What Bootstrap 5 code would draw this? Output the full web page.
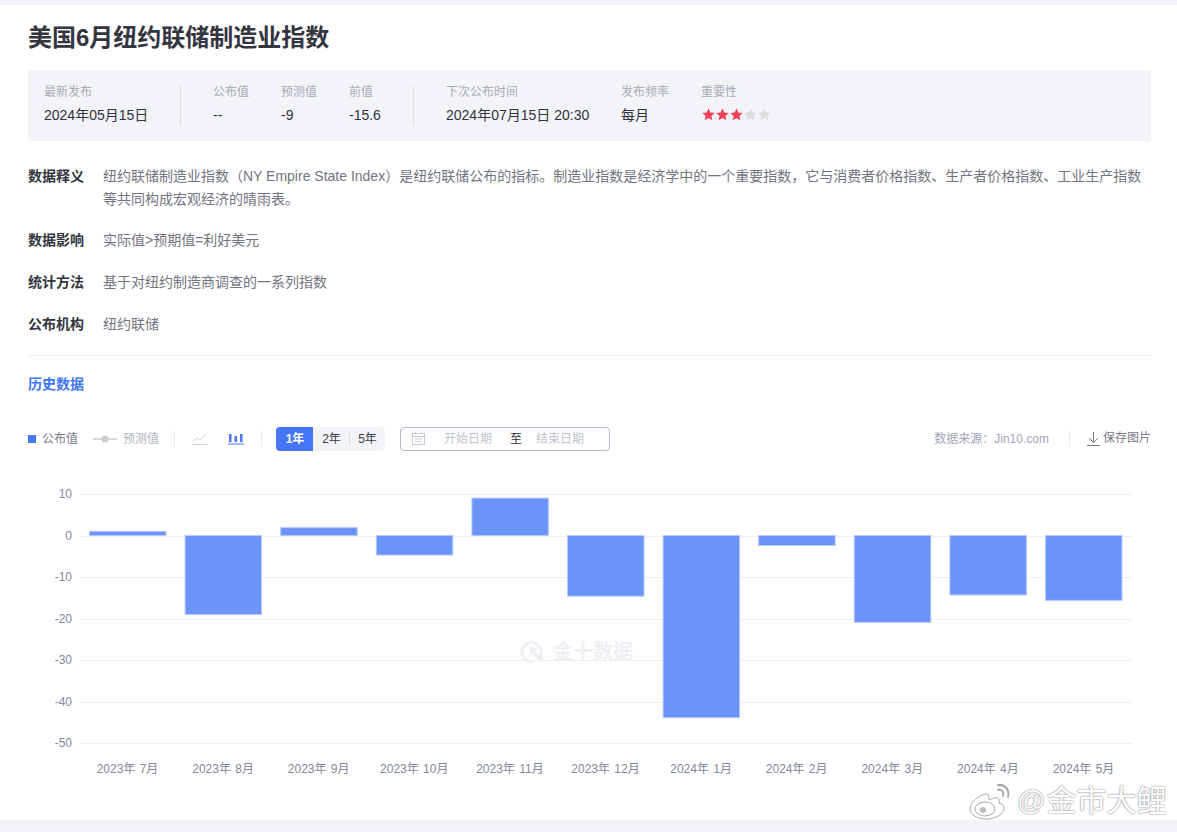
<!DOCTYPE html>
<html lang="zh-CN">
<head>
    <meta charset="UTF-8">
    <meta name="viewport" content="width=device-width, initial-scale=1.0">
    <title>美国6月纽约联储制造业指数</title>
    <link href="https://cdn.jsdelivr.net/npm/bootstrap@5.3.0/dist/css/bootstrap.min.css" rel="stylesheet">
    <style>
        html, body { height: 832px; overflow: hidden; }
        body {
            background: #f3f4f8;
            color: #2f3140;
            font-family: "Liberation Sans", "Noto Sans CJK SC", sans-serif;
            padding-top: 5px;
            position: relative;
        }
        .page-box { background: #fff; height: 815px; padding: 0 26px 0 28px; overflow: hidden; }
        .page-title { font-size: 24px; font-weight: 700; line-height: 32px; margin: 0; padding-top: 17px; height: 65px; color: #33353f; }
        .info-bar { background: #f3f4f8; height: 71px; padding: 14px 0 0 16px; }
        .info-col { flex: none; }
        .info-label { font-size: 12px; line-height: 17px; color: #a8abbc; }
        .info-value { font-size: 14px; line-height: 20px; margin-top: 4px; color: #2f3140; }
        .info-sep { width: 1px; height: 40px; background: #dcdee6; margin-top: 2px; flex: none; }
        .stars { display: flex; gap: 1px; margin: 7px 0 0 1px; }
        .stars svg { width: 13px; height: 13px; }
        .desc-list { padding-top: 24px; }
        .desc-row { display: flex; font-size: 14px; line-height: 23px; margin-bottom: 19px; }
        .desc-row.first-row { margin-bottom: 18px; }
        .desc-name { width: 75px; flex: none; font-weight: 700; color: #33353f; }
        .desc-text { color: #72747f; }
        .desc-rule { border-top: 1px solid #eceef2; margin-top: 19px; }
        .hist-title { color: #3f76f6; font-size: 14px; font-weight: 700; line-height: 20px; margin-top: 18px; }
        .tool-row { height: 24px; margin-top: 33px; font-size: 12px; }
        .leg-square { width: 8px; height: 8px; background: #4476f6; margin-right: 6px; }
        .leg-on { color: #7a7c89; }
        .leg-off { color: #b0b2be; }
        .tool-sep { width: 1px; height: 16px; background: #e9eaef; flex: none; }
        .range-group { display: flex; height: 24px; background: #f3f4f8; border-radius: 4px; overflow: hidden; line-height: 24px; text-align: center; color: #3a3c49; }
        .range-item { width: 36px; position: relative; padding-left: 1px; }
        .range-item.on { width: 37px; background: #4476f6; color: #fff; font-weight: 700; }
        .range-item + .range-item:not(.first)::before { content: ""; position: absolute; left: 0; top: 6px; height: 12px; width: 1px; background: #d9dbe3; }
        .date-box { width: 210px; height: 24px; margin-left: 15px; border: 1px solid #b6b9cc; border-radius: 4px; color: #c0c2cc; line-height: 22px; padding-left: 11px; }
        .date-icon { margin-right: 19px; margin-top: -2px; }
        .date-to { color: #2f3140; margin: 0 15px 0 17px; position: relative; left: 1px; }
        .src-text { color: #a1a4b6; }
        .save-text { color: #777985; margin-top: -3px; }
        .chart-box { display: block; margin: 0 0 0 -28px; }
        .chart-box text { font-family: "Liberation Sans", "Noto Sans CJK SC", sans-serif; font-size: 12px; fill: #85879a; word-spacing: 1px; }
        .chart-box .wm-text { font-size: 20px; font-weight: 700; fill: #eef0f4; }
        .weibo-mark { position: absolute; left: 968px; top: 781px; display: flex; align-items: center; color: #fff; font-size: 30px; line-height: 40px; text-shadow: 0 0 2px #8a8a8a, 0 0 1px #8a8a8a; white-space: nowrap; }
    </style>
</head>
<body>
<div class="page-box">
    <h1 class="page-title">美国6月纽约联储制造业指数</h1>

    <!-- Summary -->
    <div class="info-bar d-flex">
        <div class="info-col" style="width:136px"><div class="info-label">最新发布</div><div class="info-value">2024年05月15日</div></div>
        <div class="info-sep"></div>
        <div class="info-col" style="width:68px;margin-left:32px"><div class="info-label">公布值</div><div class="info-value">--</div></div>
        <div class="info-col" style="width:68px"><div class="info-label">预测值</div><div class="info-value">-9</div></div>
        <div class="info-col" style="width:64px"><div class="info-label">前值</div><div class="info-value">-15.6</div></div>
        <div class="info-sep"></div>
        <div class="info-col" style="width:175px;margin-left:32px"><div class="info-label">下次公布时间</div><div class="info-value">2024年07月15日 20:30</div></div>
        <div class="info-col" style="width:80px"><div class="info-label">发布频率</div><div class="info-value">每月</div></div>
        <div class="info-col"><div class="info-label">重要性</div>
            <div class="stars" id="stars"></div>
        </div>
    </div>

    <!-- Description -->
    <div class="desc-list">
        <div class="desc-row first-row"><div class="desc-name">数据释义</div><div class="desc-text">纽约联储制造业指数（NY Empire State Index）是纽约联储公布的指标。制造业指数是经济学中的一个重要指数，它与消费者价格指数、生产者价格指数、工业生产指数等共同构成宏观经济的晴雨表。</div></div>
        <div class="desc-row"><div class="desc-name">数据影响</div><div class="desc-text">实际值&gt;预期值=利好美元</div></div>
        <div class="desc-row"><div class="desc-name">统计方法</div><div class="desc-text">基于对纽约制造商调查的一系列指数</div></div>
        <div class="desc-row mb-0"><div class="desc-name">公布机构</div><div class="desc-text">纽约联储</div></div>
    </div>
    <div class="desc-rule"></div>
    <div class="hist-title">历史数据</div>

    <!-- Toolbar -->
    <div class="tool-row d-flex align-items-center">
        <span class="leg-square"></span><span class="leg-on">公布值</span>
        <svg width="24" height="8" viewBox="0 0 24 8" style="margin-left:15px;margin-right:6px"><path d="M0 4h24" stroke="#ccc" stroke-width="1.5"/><circle cx="12" cy="4" r="3.5" fill="#ccc"/></svg>
        <span class="leg-off">预测值</span>
        <span class="tool-sep" style="margin-left:15px"></span>
        <svg width="16" height="12" viewBox="0 0 16 12" style="margin-left:17px" fill="none" stroke="#d0d2da"><path d="M1 8l4-3 3 2 6-6"/><path d="M0 11.5h16"/></svg>
        <svg width="16" height="12" viewBox="0 0 16 12" style="margin-left:20px"><path d="M1 1h2.5v8H1zM6.5 3H9v6H6.5zM12 1h2.5v8H12z" fill="#4476f6"/><path d="M0 11h16" stroke="#4476f6"/></svg>
        <span class="tool-sep" style="margin-left:17px;margin-right:14px"></span>
        <div class="range-group">
            <div class="range-item on">1年</div>
            <div class="range-item first">2年</div>
            <div class="range-item">5年</div>
        </div>
        <div class="date-box d-flex align-items-center">
            <svg class="date-icon" width="13" height="13" viewBox="0 0 13 13" fill="none" stroke="#c9cbd4"><rect x=".5" y="1.5" width="12" height="11"/><path d="M.5 4.5h12M3.500 0v2M9.500 0v2M3 7h7M3 9.500h7"/></svg>
            <span>开始日期</span><span class="date-to">至</span><span>结束日期</span>
        </div>
        <span class="src-text ms-auto">数据来源：Jin10.com</span>
        <span class="tool-sep" style="margin-left:20px;margin-right:17px"></span>
        <svg width="13" height="14" viewBox="0 0 13 14" fill="none" stroke="#777985" style="margin-right:3px"><path d="M6.500 0v10M2 6l4.500 4.500L11 6M0 13.500h13"/></svg>
        <span class="save-text">保存图片</span>
    </div>

    <!-- Chart -->
    <svg class="chart-box" id="chart" width="1177" height="369" viewBox="0 451 1177 369"></svg>
</div>

<div class="weibo-mark">
    <svg width="46" height="40" viewBox="0 0 46 40" fill="none" style="margin-right:3px">
        <path d="M18 13C8 15 2 23 2 28c0 6 8 10 16 10 10 0 18-5 18-11 0-3-3-5-5-5 1-3 0-6-5-5-3 1-5 2-5 2 0-4-1-7-3-6z" fill="#fff" stroke="#aaa"/>
        <ellipse cx="17" cy="28" rx="10" ry="7" fill="#fff" stroke="#aaa"/>
        <circle cx="15" cy="29" r="3" fill="#bbb"/>
        <path d="M30 4c7-1 12 5 10 12M30 9c4-1 6 2 5 6" stroke="#aaa" stroke-width="2" stroke-linecap="round"/>
    </svg>
    <span style="font-size:28px;margin-right:1px">@</span><span>金市大鲤</span>
</div>

<script src="https://cdn.jsdelivr.net/npm/bootstrap@5.3.0/dist/js/bootstrap.bundle.min.js"></script>
<script>
    // Stars
    let starHtml = '';
    for (let i = 0; i < 5; i++) {
        starHtml += '<svg viewBox="0 0 24 24"><path d="M12 1l3.400 7.400 8 .9-6 5.400 1.700 8L12 18.600 4.900 22.700l1.700-8-6-5.400 8-.9z" fill="' + (i < 3 ? '#ee4056' : '#dddddd') + '"/></svg>';
    }
    document.getElementById('stars').innerHTML = starHtml;

    // Chart
    const zeroY = 535.5, unit = 4.158;
    const yOf = v => zeroY - v * unit;
    const months = ['2023年 7月','2023年 8月','2023年 9月','2023年 10月','2023年 11月','2023年 12月','2024年 1月','2024年 2月','2024年 3月','2024年 4月','2024年 5月'];
    const values = [1, -19, 1.9, -4.7, 9, -14.6, -43.8, -2.4, -20.9, -14.3, -15.6];
    let svg = '';
    for (let t = 10; t >= -50; t -= 10) {
        const y = Math.round(yOf(t)) + .5;
        svg += '<path d="M80 ' + y + 'H1132" stroke="#eeeff2"/>';
        svg += '<text x="72" y="' + (y + 3) + '" text-anchor="end">' + t + '</text>';
    }
    // watermark
    svg += '<g fill="none" stroke="#eef0f4" stroke-width="3"><path d="M538 659a9.500 9.500 0 1 0-5 2.500"/></g>';
    svg += '<path d="M529 646l9 3-3 2 6 7-2 2-7-6-1 3z" fill="#eef0f4"/><circle cx="541" cy="659" r="2.500" fill="#eef0f4"/>';
    svg += '<text class="wm-text" x="553" y="659">金十数据</text>';
    values.forEach((v, i) => {
        const x = 89.5 + i * 95.6;
        const top = yOf(Math.max(v, 0)), h = Math.abs(v) * unit;
        svg += '<rect x="' + x + '" y="' + top + '" width="76.500" height="' + h + '" fill="#6c93f7" stroke="#b5c9fb"/>';
        svg += '<text x="' + (x + 38) + '" y="773" text-anchor="middle">' + months[i] + '</text>';
    });
    document.getElementById('chart').innerHTML = svg;
</script>
</body>
</html>
